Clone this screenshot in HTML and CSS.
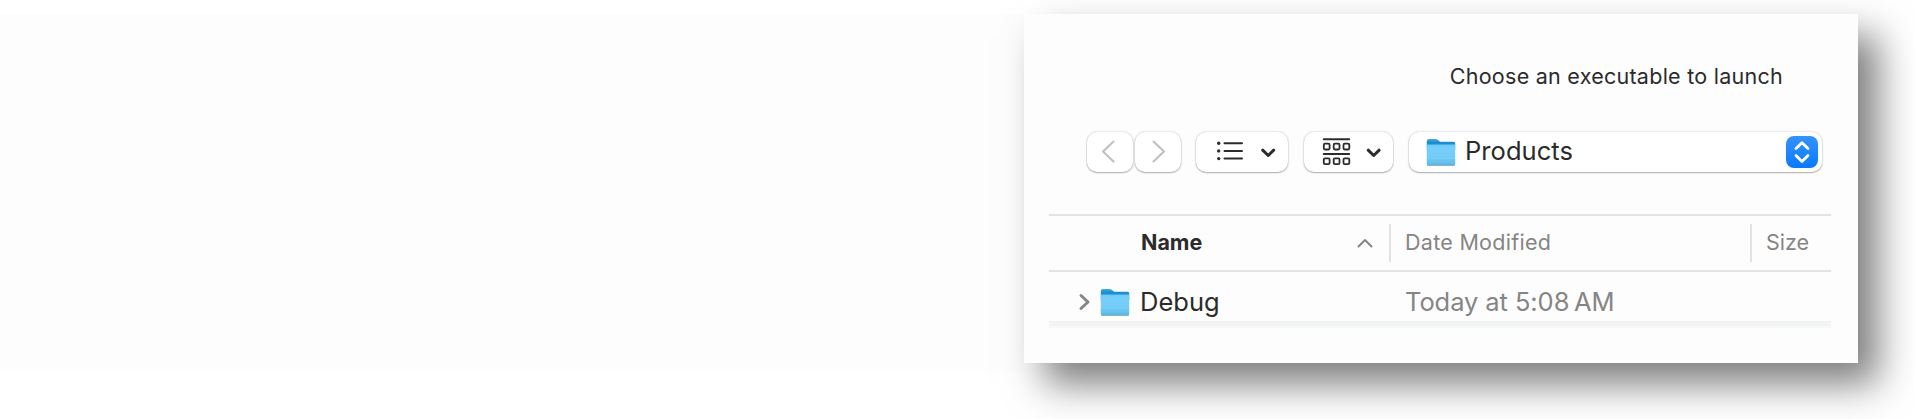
FILE: index.html
```html
<!DOCTYPE html>
<html lang="en">
<head>
<meta charset="utf-8">
<title>Choose an executable to launch</title>
<link rel="stylesheet" href="styles.css">
</head>
<body>
<svg class="defs" width="0" height="0" aria-hidden="true">
  <defs>
    <linearGradient id="folder-back" x1="0" y1="0" x2="0" y2="1">
      <stop offset="0" stop-color="#46aee0"/><stop offset=".3" stop-color="#1b8fcd"/><stop offset="1" stop-color="#1b8fcd"/>
    </linearGradient>
    <linearGradient id="folder-front" x1="0" y1="0" x2="0" y2="1">
      <stop offset="0" stop-color="#6ac7f5"/><stop offset=".15" stop-color="#75cffa"/><stop offset=".72" stop-color="#73cbf6"/><stop offset="1" stop-color="#57b5e2"/>
    </linearGradient>
    <symbol id="folder" viewBox="0 0 30 29">
      <path d="M.8 3Q.8 1 2.800 1H9.500Q11 1 12 2L13.500 3.200Q14.200 3.700 15.500 3.700H27.700Q29.200 3.700 29.200 5.500V12H.8Z" fill="url(#folder-back)"/>
      <path d="M.8 6.500H29.200V25.700Q29.200 27.200 27.700 27.200H2.300Q.8 27.200 .8 25.700Z" fill="url(#folder-front)"/>
      <path d="M1 22H29" stroke="#60bce8" stroke-width=".6"/>
      <path d="M1.500 27.500H28.500" stroke="#6c9eb8" stroke-width=".7"/>
    </symbol>
  </defs>
</svg>
<div class="page">
  <main class="dialog">
    <h1 class="title">Choose an executable to launch</h1>
    <div class="toolbar">
      <button class="control nav" aria-label="Back"><svg width="46" height="40" viewBox="0 0 46 40"><path d="M26.500 9.500L16 19.500L26.500 29.500"/></svg></button>
      <button class="control nav forward" aria-label="Forward"><svg width="46" height="40" viewBox="0 0 46 40"><path d="M18.500 9.500L29 19.500L18.500 29.500"/></svg></button>
      <button class="control list" aria-label="List view">
        <svg width="92" height="40" viewBox="0 0 92 40">
          <g class="lines"><path d="M28.500 11.200H46M28.500 18.900H46M28.500 26.600H46"/></g>
          <g class="dots"><circle cx="22.700" cy="11.200" r="1.700"/><circle cx="22.700" cy="18.900" r="1.700"/><circle cx="22.700" cy="26.600" r="1.700"/></g>
          <path class="caret" d="M66.700 18.200L72.200 23.500L77.700 18.200"/>
        </svg>
      </button>
      <button class="control group" aria-label="Group items">
        <svg width="89" height="40" viewBox="0 0 89 40">
          <g class="lines"><path d="M19.800 7.200H45.200M19.800 21.900H45.200"/></g>
          <g class="boxes"><rect x="19.800" y="11.700" width="5.800" height="5.800" rx="1.200"/><rect x="29.700" y="11.700" width="5.800" height="5.800" rx="1.200"/><rect x="39.500" y="11.700" width="5.800" height="5.800" rx="1.200"/><rect x="19.800" y="26.400" width="5.800" height="5.800" rx="1.200"/><rect x="29.700" y="26.400" width="5.800" height="5.800" rx="1.200"/><rect x="39.500" y="26.400" width="5.800" height="5.800" rx="1.200"/></g>
          <path class="caret" d="M64.200 18.200L69.700 23.500L75.200 18.200"/>
        </svg>
      </button>
      <button class="control location">
        <svg class="folder" width="30" height="29"><use href="#folder"/></svg>
        <span class="products">Products</span>
        <span class="stepper"><svg width="32" height="32" viewBox="0 0 32 32"><path d="M10 12.600L16 6.800L22 12.600M10 19.600L16 25.400L22 19.600"/></svg></span>
      </button>
    </div>
    <section class="files">
      <div class="header">
        <div class="cell name-head"><span>Name</span><svg width="18" height="12" viewBox="0 0 18 12"><path d="M2.500 9.500L9 3L15.500 9.500"/></svg></div>
        <div class="cell date-head"><span>Date Modified</span></div>
        <div class="cell size-head"><span>Size</span></div>
      </div>
      <div class="row">
        <div class="name-cell">
          <svg class="disclosure" width="14" height="20" viewBox="0 0 14 20"><path d="M3 3.500L10 10L3 16.500"/></svg>
          <svg class="folder" width="30" height="29"><use href="#folder"/></svg>
          <span class="debug">Debug</span>
        </div>
        <div class="date-cell">Today at 5:08&#8201;AM</div>
      </div>
      <div class="fade"></div>
    </section>
  </main>
</div>
</body>
</html>
```
FILE: styles.css
```css
* { box-sizing: border-box; }
body { margin: 0; background: #fff; font-family: Inter, "Liberation Sans", sans-serif; color: #2b2b2b; overflow: hidden; }
.defs { position: absolute; }
.page { height: 419px; padding: 14px 56px 0 1024px; background: linear-gradient(#fdfdfd, #fdfdfd) 0 14px / 1024px 359px no-repeat; }
.dialog { width: 834px; height: 349px; padding: 47px 27px 0 25px; background: #fdfdfd; box-shadow: 20px 21px 36px rgba(0, 0, 0, .51); }
.title { margin: 0 48px 0 0; height: 30px; font-size: 21.5px; line-height: 30px; font-weight: 400; text-align: right; letter-spacing: .26px; white-space: nowrap; }
svg { display: block; flex: none; fill: none; stroke-linecap: round; stroke-linejoin: round; }
.toolbar { display: flex; margin: 41px 0 0 38px; height: 40px; }
.control { flex: none; height: 40px; padding: 0; border: 0; border-radius: 10px; background: #fff; box-shadow: 0 0 2px rgba(0, 0, 0, .25), 0 1px 1.5px rgba(0, 0, 0, .26); font: inherit; color: inherit; }
.nav { width: 46px; stroke: #bebebe; stroke-width: 2; }
.forward { margin-left: 2px; }
.list { width: 92px; margin-left: 15px; }
.group { width: 89px; margin-left: 16px; }
.location { display: flex; align-items: center; width: 413px; margin-left: 16px; padding: 0 4px 0 17px; }
.lines { stroke: #2b2b2b; stroke-width: 2; }
.dots { fill: #2b2b2b; }
.boxes { stroke: #2b2b2b; stroke-width: 1.8; }
.caret { stroke: #2b2b2b; stroke-width: 3; }
.products { margin: -2px 0 0 9px; font-size: 25.5px; line-height: 36px; letter-spacing: .05px; }
.stepper { margin-left: auto; border-radius: 8px; background: linear-gradient(#3593ff, #087aff); stroke: #fff; stroke-width: 2.8; }
.files { margin-top: 42px; }
.header { display: flex; align-items: center; height: 58px; border-top: 2px solid #e3e3e3; border-bottom: 2px solid #e3e3e3; font-size: 21.5px; line-height: 36px; color: #858585; }
.cell { height: 38px; white-space: nowrap; }
.name-head { display: flex; align-items: center; justify-content: space-between; width: 342px; padding: 0 15px 0 92px; border-right: 2px solid #e3e3e3; color: #2b2b2b; font-weight: 700; }
.name-head span { height: 38px; }
.name-head svg { stroke: #858585; stroke-width: 2; }
.date-head { width: 361px; padding-left: 14px; border-right: 2px solid #e3e3e3; letter-spacing: .28px; }
.size-head { padding-left: 14px; }
.row { display: flex; height: 49px; font-size: 25.5px; line-height: 60px; }
.name-cell { display: flex; align-items: center; width: 356px; height: 60px; padding-left: 29px; }
.disclosure { stroke: #858585; stroke-width: 3; }
.name-cell .folder { margin-left: 8px; }
.debug { margin-left: 10px; }
.date-cell { color: #858585; white-space: nowrap; letter-spacing: -.08px; }
.fade { height: 8px; background: linear-gradient(#f2f3f3, #f3f4f4 60%, #fdfdfd); }
```
